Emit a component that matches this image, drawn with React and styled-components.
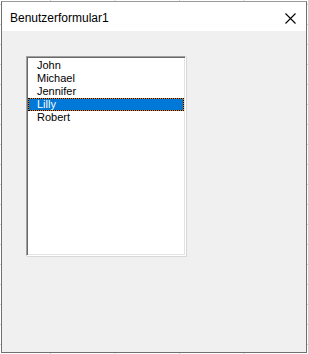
import React from 'react';
import styled, { createGlobalStyle } from 'styled-components';

const names = ['John', 'Michael', 'Jennifer', 'Lilly', 'Robert'];
const selectedName = 'Lilly';

export default function App() {
  return (
    <>
      <Global />
      <Window>
        <TitleBar>
          <Title>Benutzerformular1</Title>
          <CloseButton aria-label="Schließen">
            <svg width="11" height="11" viewBox="0 0 11 11">
              <path d="M0.5 0.5 L10.5 10.5 M10.5 0.5 L0.5 10.5" stroke="#000" strokeWidth="1.1" fill="none" />
            </svg>
          </CloseButton>
        </TitleBar>
        <Client>
          <ListBox>
            {names.map((n) => (
              <Item key={n} selected={n === selectedName}>{n}</Item>
            ))}
          </ListBox>
        </Client>
      </Window>
    </>
  );
}

const Global = createGlobalStyle`
  html, body {
    margin: 0;
    padding: 0;
    width: 309px;
    height: 354px;
    overflow: hidden;
    background-color: #fff;
    background-image:
      linear-gradient(to right, #d4d4d4 1px, transparent 1px),
      linear-gradient(to bottom, #d4d4d4 1px, transparent 1px);
    background-size: 64.5px 20px, 20px 20px;
    background-position: 50px 0, 0 4px;
  }
`;

const Window = styled.div`
  margin: 1px 0 0 1px;
  width: 304px;
  height: 350px;
  border: 1px solid #707070;
  border-top-color: #9a9a9a;
  display: flex;
  flex-direction: column;
  background: #f0f0f0;
  font-family: "Liberation Sans", Arial, sans-serif;
`;

const TitleBar = styled.div`
  height: 29px;
  background: #fff;
  display: flex;
  align-items: center;
  justify-content: space-between;
  padding: 0 8px 0 8px;
`;

const Title = styled.div`
  font-size: 12px;
  color: #000;
  padding-top: 2px;
`;

const CloseButton = styled.div`
  width: 11px;
  height: 11px;
  margin-right: 2px;
  margin-top: 3px;
  display: flex;
`;

const Client = styled.div`
  flex: 1;
  padding: 25px 0 0 24px;
`;

const ListBox = styled.div`
  width: 156px;
  height: 194px;
  background: #fff;
  border: 1px solid;
  border-color: #a0a0a0 #fff #fff #a0a0a0;
  box-shadow:
    inset 1px 1px 0 #696969,
    inset -1px -1px 0 #e3e3e3,
    1px 1px 0 #d8d8d8;
  padding: 2px 1px 2px 1px;
  display: flex;
  flex-direction: column;
`;

const Item = styled.div`
  height: 11px;
  line-height: 11px;
  font-size: 11px;
  padding-left: 8px;
  border: 1px ${(p) => (p.selected ? 'dotted #000' : 'solid transparent')};
  color: ${(p) => (p.selected ? '#fff' : '#000')};
  background: ${(p) =>
    p.selected
      ? 'linear-gradient(#0078d7, #0078d7) padding-box, #e8820c border-box'
      : 'transparent'};
`;
